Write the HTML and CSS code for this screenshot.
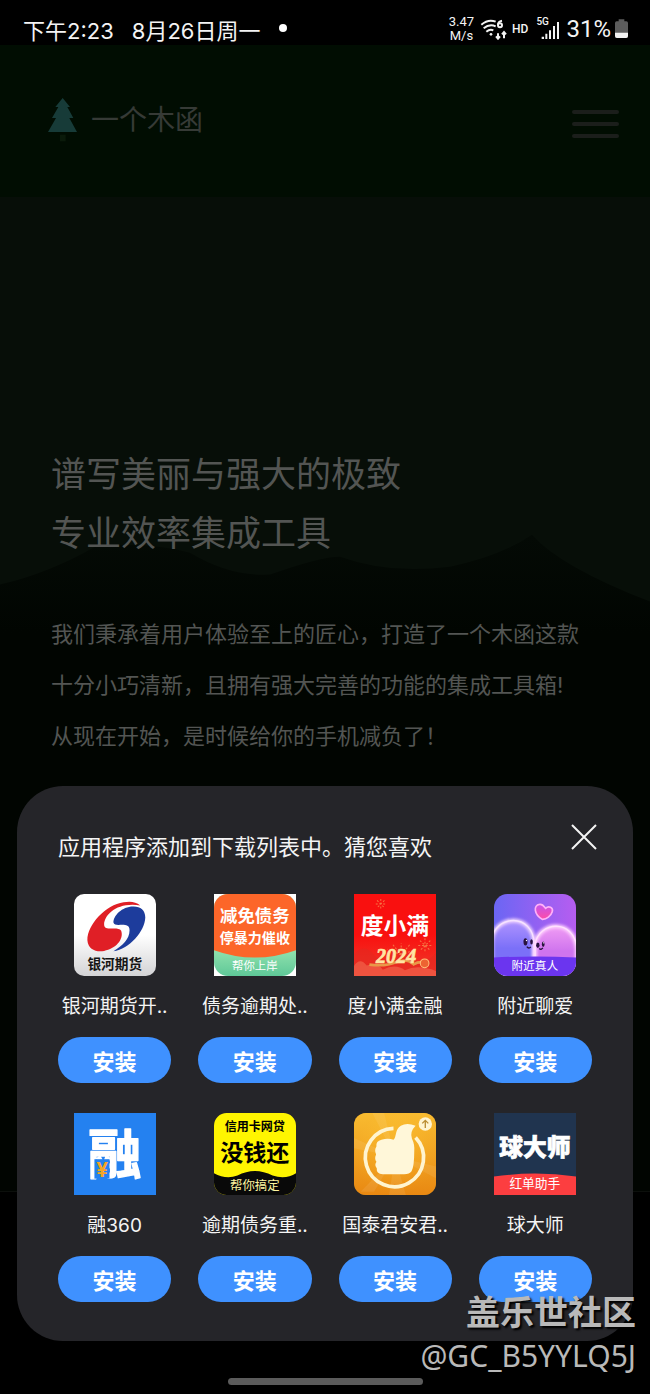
FILE: index.html
```html
<!DOCTYPE html>
<html lang="zh-CN">
<head>
  <meta charset="UTF-8" />
  <meta name="viewport" content="width=device-width, initial-scale=1.0"/>
  <title>一个木函</title>
  <link rel="stylesheet" href="styles.css">
</head>
<body>
  <div class="status">
    <span class="time">下午2:23</span>
    <span class="date">8月26日周一</span>
    <span class="dot"></span>
    <div class="status-right">
      <span class="speed">3.47<br>M/s</span>
      <svg class="wifi" width="28" height="22" viewBox="0 0 84 66" fill="none" stroke="#f2f2f2" stroke-width="6">
        <path d="M4 20 Q25 2 47 11M11 31 Q28 17 47 25M19 41 Q30 32 40 37"/>
        <circle cx="33" cy="49" r="4" fill="#f2f2f2" stroke="none"/>
        <path d="M66 8 Q54 10 54 21M54 46V61M48 55l6 7 6-7M72 61V43M66 49l6-7 6 7"/>
        <circle cx="60" cy="22" r="6"/>
      </svg>
      <span class="hd">HD</span>
      <span class="signal">
        <svg width="24" height="22" viewBox="0 0 72 66" fill="#f2f2f2">
          <path d="M17 56h7v7h-7zM28 47h6v16h-6zM39 37h6v26h-6zM51 24h6v39h-6zM63 12h6v51h-6z"/>
        </svg>
        <span class="net">5G</span>
      </span>
      <span class="percent">31%</span>
      <svg class="battery" width="13" height="19" viewBox="0 0 39 57">
        <path d="M11 1h17v6h6q5 0 5 5v39q0 6-6 6H6q-6 0-6-6V12q0-5 5-5h6z" fill="#5c5c5c"/>
        <path d="M0 41h39v10q0 6-6 6H6q-6 0-6-6z" fill="#f2f2f2"/>
      </svg>
    </div>
  </div>

  <header class="site-header">
    <a class="brand" href="#">
      <svg width="29" height="44" viewBox="0 0 87 132">
        <path d="M36 110h17v20H36z" fill="#0a1a0a"/>
        <path d="M44 0L66 27H58L76 60H64L87 102H0L24 60H12L31 27H22z" fill="#173b38"/>
      </svg>
      <span>一个木函</span>
    </a>
    <button class="menu" aria-label="菜单"><i></i><i></i><i></i></button>
  </header>

  <main class="hero">
    <svg class="mountains" viewBox="0 0 650 995" preserveAspectRatio="none">
      <defs>
        <linearGradient id="ridge" x2="0" y2="1"><stop stop-color="#040a05"/><stop offset=".15" stop-color="#010501"/></linearGradient>
      </defs>
      <path d="M0 388Q50 376 95 350Q150 345 190 356Q230 380 270 378Q320 360 340 360Q390 378 450 370Q500 360 532 338Q560 370 650 405V995H0z" fill="url(#ridge)"/>
    </svg>
    <div class="hero-text">
      <h1>谱写美丽与强大的极致<br>专业效率集成工具</h1>
      <p>我们秉承着用户体验至上的匠心，打造了一个木函这款<br>十分小巧清新，且拥有强大完善的功能的集成工具箱!<br>从现在开始，是时候给你的手机减负了！</p>
    </div>
  </main>
  <div class="below"></div>

  <section class="sheet">
    <div class="sheet-head">
      <h2>应用程序添加到下载列表中。猜您喜欢</h2>
      <button class="close" aria-label="关闭">
        <svg width="26" height="26" viewBox="0 0 26 26" stroke="#f4f4f4" stroke-width="2"><path d="M1 1L25 25M25 1L1 25"/></svg>
      </button>
    </div>
    <div class="apps">
      <div class="app">
        <svg class="icon" viewBox="0 0 245 245">
          <defs><linearGradient id="silver" x2="0" y2="1"><stop offset=".5" stop-color="#fff"/><stop offset="1" stop-color="#d3d3d5"/></linearGradient></defs>
          <rect width="245" height="245" rx="30" fill="url(#silver)"/>
          <path d="M198 34Q178 18 148 25C95 32 40 92 40 138C42 166 66 174 90 170C124 164 150 136 141 110C132 94 90 114 90 91C91 62 128 23 198 34z" fill="#e01f26"/>
          <path d="M178 37C145 36 116 65 118 86C122 102 166 79 166 108C166 135 145 153 118 171C166 164 211 112 213 70C213 48 199 37 178 37z" fill="#1d3c9c"/>
          <text x="122" y="224" font-size="41" font-weight="700" fill="#151515" text-anchor="middle">银河期货</text>
        </svg>
        <span class="name">银河期货开..</span>
        <button class="install">安装</button>
      </div>
      <div class="app">
        <svg class="icon" viewBox="0 0 245 245">
          <defs>
            <clipPath id="round"><rect width="245" height="245" rx="42"/></clipPath>
            <linearGradient id="mint" x2="0" y2="1"><stop offset=".7" stop-color="#8de0ac"/><stop offset="1" stop-color="#5fc898"/></linearGradient>
          </defs>
          <rect width="245" height="245" fill="#fff"/>
          <g clip-path="url(#round)">
            <rect width="245" height="245" fill="url(#mint)"/>
            <path d="M0 0H245V168Q122 212 0 168z" fill="#fc6629"/>
          </g>
          <g fill="#fff" text-anchor="middle">
            <text x="122" y="83" font-size="52" font-weight="700">减免债务</text>
            <text x="122" y="147" font-size="42" font-weight="700">停暴力催收</text>
            <text x="122" y="228" font-size="34">帮你上岸</text>
          </g>
        </svg>
        <span class="name">债务逾期处..</span>
        <button class="install">安装</button>
      </div>
      <div class="app">
        <svg class="icon" viewBox="0 0 245 245">
          <defs><linearGradient id="festive" x2="0" y2="1"><stop offset=".5" stop-color="#f9100f"/><stop offset="1" stop-color="#ee3c2c"/></linearGradient></defs>
          <rect width="245" height="245" fill="url(#festive)"/>
          <path d="M0 180Q30 145 58 180T112 178T168 182T245 176V245H0z" fill="#e2281f" opacity=".6"/>
          <path d="M0 245V215Q18 188 38 214Q70 204 86 226Q125 207 152 228Q190 209 245 230V245z" fill="#f1644b" opacity=".7"/>
          <g fill="none" stroke="#f78b4f" stroke-width="3" stroke-dasharray="6 5" opacity=".8">
            <path d="M80 15V46M65 30H96M69 19L91 41M91 19L69 41"/>
            <path d="M212 132V174M192 154H234M197 139L228 169M228 139L197 169"/>
            <path d="M141 182V147M141 182L115 150M141 182L167 151M141 182L99 165M141 182L181 167"/>
          </g>
          <path d="M46 211Q95 217 125 204T178 210Q198 198 223 208" fill="none" stroke="#e99748" stroke-width="8"/>
          <circle cx="211" cy="207" r="13" fill="#ed6332" stroke="#ffc17b" stroke-width="3"/>
          <text x="122" y="120" font-size="68" font-weight="700" fill="#fff" text-anchor="middle">度小满</text>
          <text class="script" x="126" y="207" font-size="60" fill="#ffe4a3" stroke="#ffe4a3" stroke-width="2" text-anchor="middle">2024</text>
        </svg>
        <span class="name">度小满金融</span>
        <button class="install">安装</button>
      </div>
      <div class="app">
        <svg class="icon" viewBox="0 0 245 245">
          <defs>
            <clipPath id="soft"><rect width="245" height="245" rx="40"/></clipPath>
            <linearGradient id="violet"><stop stop-color="#6b66f4"/><stop offset="1" stop-color="#b65df0"/></linearGradient>
            <linearGradient id="blueBlob" x2="0" y2="1"><stop stop-color="#b094ff"/><stop offset=".5" stop-color="#7b70f8"/></linearGradient>
            <linearGradient id="pinkBlob" x2="0" y2="1"><stop stop-color="#f09cf4"/><stop offset=".5" stop-color="#cf74ee"/></linearGradient>
            <linearGradient id="love" x2="0" y2="1"><stop stop-color="#c553ed"/><stop offset="1" stop-color="#ff4ca5"/></linearGradient>
            <filter id="glow"><feGaussianBlur stdDeviation="5"/></filter>
          </defs>
          <g clip-path="url(#soft)">
            <rect width="245" height="245" fill="url(#violet)"/>
            <path d="M-8 245V142C0 60 118 54 120 150V245z" fill="url(#blueBlob)"/>
            <path d="M-8 245V142C0 60 118 54 120 150V245z" fill="none" stroke="#f3d6ff" stroke-width="12" filter="url(#glow)"/>
            <path d="M-8 245V142C0 60 118 54 120 150V245z" fill="none" stroke="#f6e3ff" stroke-width="4"/>
            <path d="M123 245V150C132 82 240 70 248 164V245z" fill="url(#pinkBlob)"/>
            <path d="M123 245V150C132 82 240 70 248 164V245z" fill="none" stroke="#ffd2ff" stroke-width="12" filter="url(#glow)"/>
            <path d="M123 245V150C132 82 240 70 248 164V245z" fill="none" stroke="#ffe0fd" stroke-width="4"/>
            <path d="M145 76C119 62 117 33 136 31C148 29 151 41 154 43C163 34 178 40 174 53C170 66 157 75 145 76z" fill="url(#love)" stroke="#ffb1f8" stroke-width="5"/>
            <g fill="#29133f"><ellipse cx="94" cy="143" rx="6" ry="11"/><ellipse cx="112" cy="143" rx="4" ry="8"/><ellipse cx="131" cy="153" rx="5" ry="8"/><ellipse cx="147" cy="150" rx="4" ry="8"/></g>
            <g fill="#fff"><circle cx="97" cy="139" r="2"/><circle cx="148" cy="146" r="2"/></g>
            <path d="M98 157Q104 165 110 158M135 163Q141 168 146 161" fill="none" stroke="#29133f" stroke-width="4"/>
            <path d="M0 190Q122 183 245 190V245H0z" fill="#6b35ef"/>
          </g>
          <text x="122" y="226" font-size="35" fill="#fff" text-anchor="middle">附近真人</text>
        </svg>
        <span class="name">附近聊爱</span>
        <button class="install">安装</button>
      </div>
      <div class="app">
        <svg class="icon" viewBox="0 0 245 245">
          <rect width="245" height="245" fill="#2481f0"/>
          <text x="122" y="182" font-size="160" font-weight="700" fill="#fff" stroke="#fff" stroke-width="4" stroke-linejoin="round" text-anchor="middle">融</text>
          <rect x="61" y="138" width="45" height="58" fill="#2481f0"/>
          <text x="84" y="190" font-size="62" font-weight="700" fill="#f6a523" text-anchor="middle">¥</text>
        </svg>
        <span class="name">融360</span>
        <button class="install">安装</button>
      </div>
      <div class="app">
        <svg class="icon" viewBox="0 0 245 245">
          <defs><clipPath id="round2"><rect width="245" height="245" rx="38"/></clipPath></defs>
          <g clip-path="url(#round2)">
            <rect width="245" height="245" fill="#fff500"/>
            <path d="M0 180Q35 199 70 187Q122 160 175 187Q215 199 245 180V245H0z" fill="#090909"/>
          </g>
          <g text-anchor="middle" font-weight="700">
            <text x="122" y="55" font-size="36">信用卡网贷</text>
            <text x="122" y="143" font-size="69">没钱还</text>
            <text x="122" y="229" font-size="37" font-weight="400" fill="#fff6a0">帮你搞定</text>
          </g>
        </svg>
        <span class="name">逾期债务重..</span>
        <button class="install">安装</button>
      </div>
      <div class="app">
        <svg class="icon" viewBox="0 0 245 245">
          <defs>
            <radialGradient id="gold"><stop stop-color="#ffc52d"/><stop offset="1" stop-color="#efa21c"/></radialGradient>
            <linearGradient id="amber" x2="0" y2="1"><stop stop-color="#ffcc3d" stop-opacity=".6"/><stop offset="1" stop-color="#e57a0c" stop-opacity=".65"/></linearGradient>
          </defs>
          <rect width="245" height="245" rx="36" fill="url(#gold)"/>
          <rect width="245" height="245" rx="36" fill="url(#amber)"/>
          <path d="M122 130L0 75V105zM122 130L20 235H60zM122 130L105 245H155zM122 130L245 160V195zM122 130L55 0H90z" fill="#fff" opacity=".08"/>
          <path d="M118 46A87 87 0 1 0 184 73" fill="none" stroke="#fff4cf" stroke-width="11"/>
          <path d="M118 80C128 70 122 48 140 38Q158 27 184 38Q166 56 173 76Q182 94 180 116Q180 160 172 174Q166 183 150 183H86Q66 181 68 165Q60 156 67 146Q60 136 66 124Q60 110 67 100Q65 84 82 80Q102 74 118 80z" fill="#fff7d9"/>
          <circle cx="213" cy="33" r="20" fill="#fff4d1"/>
          <path d="M213 45V22M204 31L213 22L222 31" fill="none" stroke="#bb8d33" stroke-width="4"/>
        </svg>
        <span class="name">国泰君安君..</span>
        <button class="install">安装</button>
      </div>
      <div class="app">
        <svg class="icon" viewBox="0 0 245 245">
          <rect width="245" height="245" fill="#20344f"/>
          <path d="M0 190Q122 172 245 190V245H0z" fill="#fc3e40"/>
          <text x="122" y="128" font-size="71" font-weight="900" fill="#fff" stroke="#fff" stroke-width="2" text-anchor="middle">球大师</text>
          <text x="122" y="225" font-size="38" fill="#fff" text-anchor="middle">红单助手</text>
        </svg>
        <span class="name">球大师</span>
        <button class="install">安装</button>
      </div>
    </div>
  </section>

  <div class="home-bar"></div>
  <div class="watermark"><b>盖乐世社区</b><span>@GC_B5YYLQ5J</span></div>
</body>
</html>
```
FILE: styles.css
```css
* {
  box-sizing: border-box;
}
body {
  position: relative;
  display: flex;
  flex-direction: column;
  min-height: 100vh;
  margin: 0;
  background: #000;
  color: #f4f4f4;
  font-family: Inter, "Noto Sans CJK SC", sans-serif;
}
h1, h2, p {
  margin: 0;
  font-weight: 400;
}
button {
  border: none;
  padding: 0;
  background: none;
  color: inherit;
  font-family: inherit;
}
svg {
  display: block;
}

/* status bar */
.status {
  display: flex;
  align-items: center;
  height: 45px;
  padding: 16px 22px 0 23px;
  font-size: 22px;
  line-height: 32px;
  white-space: nowrap;
}
.date {
  margin-left: 18px;
}
.dot {
  width: 8px;
  height: 8px;
  margin: 0 0 6px 19px;
  border-radius: 50%;
  background: #fff;
}
.status-right {
  display: flex;
  align-items: center;
  margin-left: auto;
  padding-bottom: 4px;
  font-family: Roboto, sans-serif;
}
.speed {
  font-size: 13px;
  line-height: 14px;
  text-align: center;
}
.wifi {
  margin-left: 6px;
}
.hd {
  margin: 0 8px 0 4px;
  font-size: 12px;
  font-weight: 500;
}
.signal {
  position: relative;
}
.net {
  position: absolute;
  top: -1px;
  left: 0;
  font-size: 10px;
  line-height: 10px;
  font-weight: 500;
}
.percent {
  margin: 0 4px 0 6px;
  font-size: 24px;
}

/* page behind the sheet */
.site-header {
  display: flex;
  align-items: center;
  justify-content: space-between;
  height: 152px;
  padding: 0 31px 2px 48px;
  background: #010d02;
}
.brand {
  display: flex;
  align-items: center;
  gap: 14px;
  color: #363a36;
  font-size: 28px;
  line-height: 44px;
  text-decoration: none;
}
.menu {
  display: flex;
  flex-direction: column;
  gap: 8px;
  width: 47px;
  padding-top: 8px;
}
.menu i {
  height: 4px;
  border-radius: 2px;
  background: #1b1e1b;
}
.hero {
  position: relative;
  flex: 1;
  padding: 248px 51px 0;
  background: #070e08;
  border-bottom: 1px solid #0c0f0c;
}
.mountains {
  position: absolute;
  inset: 0;
  width: 100%;
  height: 100%;
}
.hero-text {
  position: relative;
  color: #535553;
}
.hero h1 {
  font-size: 35px;
  line-height: 59px;
}
.hero p {
  margin-top: 46px;
  font-size: 22px;
  line-height: 51px;
}
.below {
  height: 202px;
}

/* bottom sheet */
.sheet {
  position: absolute;
  left: 17px;
  right: 17px;
  bottom: 53px;
  padding: 38px 36px 39px;
  border-radius: 46px;
  background: #252529;
}
.sheet-head {
  display: flex;
  align-items: flex-start;
  justify-content: space-between;
  padding-left: 5px;
}
.sheet-head h2 {
  font-size: 22px;
  line-height: 46px;
}
.close {
  height: 26px;
}
.apps {
  display: grid;
  grid-template-columns: repeat(4, 1fr);
  gap: 30px 27px;
  padding: 24px 5px 0;
}
.app {
  display: flex;
  flex-direction: column;
  align-items: center;
  gap: 16px;
}
.icon {
  width: 82px;
  height: 82px;
}
.script {
  font-family: "Liberation Serif", serif;
  font-style: italic;
  font-weight: 700;
}
.name {
  font-size: 19px;
  line-height: 29px;
  white-space: nowrap;
}
.install {
  width: 100%;
  height: 46px;
  border-radius: 23px;
  background: #3f91ff;
  color: #fff;
  font-size: 22px;
  font-weight: 600;
}

.home-bar {
  position: absolute;
  bottom: 9px;
  left: 35%;
  width: 30%;
  height: 7px;
  border-radius: 4px;
  background: #5b5b5b;
}
.watermark {
  position: absolute;
  right: 14px;
  bottom: 16px;
  display: flex;
  flex-direction: column;
  align-items: flex-end;
  color: #b9b9b9;
  font-family: "Noto Sans", "Noto Sans CJK SC", sans-serif;
  font-size: 30px;
  line-height: 44px;
}
.watermark b {
  font-size: 34px;
  font-weight: 700;
  text-shadow: 2px 2px 2px #000;
}
```
